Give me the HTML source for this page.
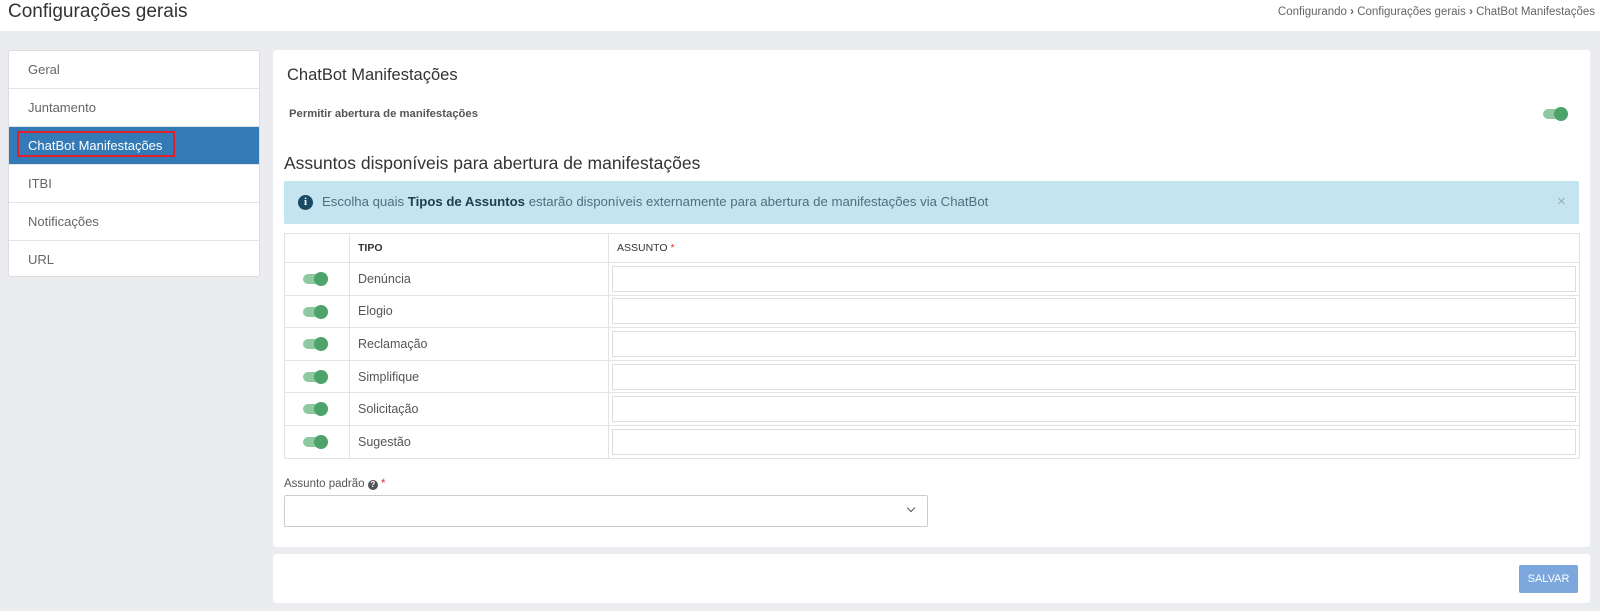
<!DOCTYPE html>
<html><head><meta charset="utf-8"><style>
*{box-sizing:border-box;margin:0;padding:0}
body{width:1600px;height:611px;background:#ebecf0;font-family:"Liberation Sans",sans-serif;color:#555;position:relative;overflow:hidden}
.abs{position:absolute}
.top{left:0;top:0;width:1600px;height:31px;background:#fff}
.side{left:8px;top:50px;width:252px;height:227px;background:#fff;border:1px solid #ddd;border-radius:3px;overflow:hidden}
.side div{height:38px;line-height:37px;padding-left:19px;font-size:13px;color:#666;border-bottom:1px solid #e4e4e4}
.side div.act{background:#337ab7;color:#fff;position:relative}
.panel{left:273px;top:50px;width:1317px;height:497px;background:#fff;border-radius:3px}
.foot{left:273px;top:554px;width:1317px;height:49px;background:#fff;border-radius:3px}
.tg{position:absolute;width:25px;height:14px}
.tg:before{content:"";position:absolute;left:0;top:2px;width:22px;height:10px;border-radius:5px;background:#8fc9a1}
.tg:after{content:"";position:absolute;right:0;top:0;width:14px;height:14px;border-radius:50%;background:#4ea36a}
table{position:absolute;left:284px;top:233px;width:1296px;border-collapse:collapse}
td{border:1px solid #e3e3e3;height:32.6px;font-size:12.5px;color:#555;position:relative}
th{border:1px solid #e3e3e3;height:29px;font-size:10.5px;color:#333;text-align:left;padding-left:8px;font-weight:bold}
td.n{padding-left:8px}
td input{display:block;margin:0 3px;width:calc(100% - 6px);height:26px;border:1px solid #ddd}
</style></head><body>
<div class="abs top"></div>
<div class="abs" style="left:8px;top:1px;font-size:19px;color:#333">Configurações gerais</div>
<div class="abs" style="right:5px;top:6px;font-size:11.5px;color:#666">Configurando <b>›</b> Configurações gerais <b>›</b> ChatBot Manifestações</div>
<div class="abs side">
<div>Geral</div><div>Juntamento</div>
<div class="act"><span style="position:absolute;left:8px;top:4px;width:158px;height:26px;border:2px solid #e0202a"></span>ChatBot Manifestações</div>
<div>ITBI</div><div>Notificações</div><div style="border:0">URL</div>
</div>
<div class="abs panel"></div>
<div class="abs" style="left:287px;top:66px;font-size:16.5px;color:#333">ChatBot Manifestações</div>
<div class="abs" style="left:289px;top:108px;font-size:11.3px;font-weight:bold;color:#555">Permitir abertura de manifestações</div>
<div class="tg" style="left:1543px;top:107px"></div>
<div class="abs" style="left:284px;top:153px;font-size:17.5px;color:#333">Assuntos disponíveis para abertura de manifestações</div>
<div class="abs" style="left:284px;top:181px;width:1295px;height:43px;background:#c4e5f0;border-radius:2px"></div>
<div class="abs" style="left:298px;top:195px;width:15px;height:15px;border-radius:50%;background:#1c4a63;color:#fff;font-size:11px;font-weight:bold;text-align:center;line-height:15px;font-family:'Liberation Serif',serif">i</div>
<div class="abs" style="left:322px;top:194px;font-size:13.2px;color:#4f6f7d">Escolha quais <b style="color:#1f3d4d">Tipos de Assuntos</b> estarão disponíveis externamente para abertura de manifestações via ChatBot</div>
<div class="abs" style="left:1557px;top:193px;font-size:15px;color:#9ab">×</div>
<table>
<tr><th style="width:65px"></th><th style="width:259px">TIPO</th><th style="font-weight:normal;color:#333">ASSUNTO <span style="color:#d33">*</span></th></tr>
<tr><td><div class="tg" style="left:18px;top:9px"></div></td><td class="n">Denúncia</td><td><input></td></tr>
<tr><td><div class="tg" style="left:18px;top:9px"></div></td><td class="n">Elogio</td><td><input></td></tr>
<tr><td><div class="tg" style="left:18px;top:9px"></div></td><td class="n">Reclamação</td><td><input></td></tr>
<tr><td><div class="tg" style="left:18px;top:9px"></div></td><td class="n">Simplifique</td><td><input></td></tr>
<tr><td><div class="tg" style="left:18px;top:9px"></div></td><td class="n">Solicitação</td><td><input></td></tr>
<tr><td><div class="tg" style="left:18px;top:9px"></div></td><td class="n">Sugestão</td><td><input></td></tr>
</table>
<div class="abs" style="left:284px;top:478px;font-size:11.5px;color:#555">Assunto padrão <span style="display:inline-block;width:10px;height:10px;border-radius:50%;background:#555;color:#fff;font-size:8px;text-align:center;line-height:10px;font-weight:bold">?</span> <span style="color:#d33">*</span></div>
<div class="abs" style="left:284px;top:495px;width:644px;height:32px;border:1px solid #ccc;border-radius:2px"></div>
<div class="abs" style="left:908px;top:505px;width:6px;height:6px;border-right:1.3px solid #555;border-bottom:1.3px solid #555;transform:rotate(45deg)"></div>
<div class="abs foot"></div>
<div class="abs" style="left:1519px;top:565px;width:59px;height:28px;background:#7ba7dc;border-radius:2px;color:#fff;font-size:11px;text-align:center;line-height:28px">SALVAR</div>
</body></html>
